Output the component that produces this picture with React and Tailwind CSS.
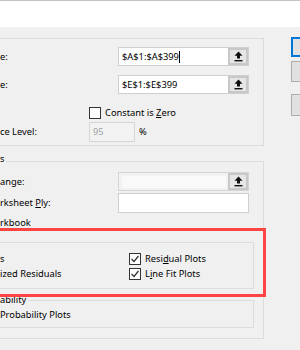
import React from "react";

function RefButton() {
  return (
    <div className="w-[20px] h-full shrink-0 flex items-center justify-center bg-[#e6e6e6] border-2 border-[#c8c8c8]">
      <svg width="9" height="11" viewBox="0 0 9 11">
        <path d="M4.5 0.5 L8.5 4.8 H6 V7.6 H3 V4.8 H0.5 Z" fill="#111" />
        <rect x="0.5" y="9" width="8" height="1.4" fill="#111" />
      </svg>
    </div>
  );
}

function RefInput({ value, caret, disabled }) {
  return (
    <div className={`flex h-[19px] w-[131px] border ${disabled ? "border-[#d4d4d4] bg-[#f2f2f2]" : "border-[#cfcfcf] bg-white"}`}>
      <div className="flex-1 flex items-center pl-[3px]">
        {disabled ? (
          <div className="w-[104px] h-[12px] bg-[#f9f9f9]" />
        ) : (
          <>
            <span>{value}</span>
            {caret && <span className="w-px h-[12px] bg-black" />}
          </>
        )}
      </div>
      <RefButton />
    </div>
  );
}

function Check({ checked }) {
  return (
    <div className="w-[12px] h-[12px] border border-[#333] bg-white flex items-center justify-center shrink-0">
      {checked && (
        <svg width="10" height="10" viewBox="0 0 10 10">
          <path d="M1.5 5 L4 7.5 L8.5 2" fill="none" stroke="#333" strokeWidth="1.2" />
        </svg>
      )}
    </div>
  );
}

function Button({ focused, className }) {
  return (
    <div
      className={`w-[40px] bg-[#e1e1e1] ${focused ? "border-2 border-[#0078d7]" : "border border-[#adadad]"} ${className}`}
    />
  );
}

export default function App() {
  return (
    <div className="w-[300px] h-[350px] overflow-hidden bg-[#f0f0f0] text-[9.3px] leading-[12px] text-black font-['Noto_Sans',sans-serif]">
      <div className="h-[27px] bg-white border-t border-[#c4c4c4]" />
      <div className="flex">
        {/* left column */}
        <div className="w-[264px] shrink-0 pt-[11px] relative">
          {/* Input */}
          <div className="h-[108px] border border-l-0 border-[#dcdcdc]">
            <div className="flex items-center mt-[8px]">
              <span className="w-[118px]">e:</span>
              <RefInput value="$A$1:$A$399" caret />
            </div>
            <div className="flex items-center mt-[9px]">
              <span className="w-[118px]">e:</span>
              <RefInput value="$E$1:$E$399" />
            </div>
            <div className="flex items-center mt-[13px] pl-[89px] gap-[4px] h-[12px]">
              <Check />
              <span>
                Constant is <span className="underline">Z</span>ero
              </span>
            </div>
            <div className="flex items-center mt-[3px] h-[20px]">
              <span className="w-[89px]">ce Level:</span>
              <div className="w-[46px] h-[20px] border border-[#d6d6d6] bg-[#f3f3f3] flex items-center pl-[3px] text-[#a0a0a0]">
                95
              </div>
              <span className="ml-[4px]">%</span>
            </div>
          </div>

          {/* Output options */}
          <div className="mt-[15px] h-[178px] border border-l-0 border-[#dcdcdc] relative">
            <span className="absolute left-0 top-[-9px] bg-[#f0f0f0] pr-[2px]">s</span>
            <div className="flex items-center mt-[10px]">
              <span className="w-[118px]">ange:</span>
              <RefInput disabled />
            </div>
            <div className="flex items-center mt-[2px]">
              <span className="w-[118px]">
                rksheet <span className="underline">P</span>ly:
              </span>
              <div className="w-[131px] h-[20px] border border-[#cfcfcf] bg-white" />
            </div>
            <div className="mt-[4px]">rkbook</div>

            {/* Residuals */}
            <div className="mt-[13px] mr-[9px] h-[47px] border border-l-0 border-[#dcdcdc] pt-[8px]">
              <div className="flex items-center h-[15px]">
                <span className="w-[129px]">s</span>
                <Check checked />
                <span className="ml-[4px]">
                  Resi<span className="underline">d</span>ual Plots
                </span>
              </div>
              <div className="flex items-center h-[15px]">
                <span className="w-[129px]">ized Residuals</span>
                <Check checked />
                <span className="ml-[4px]">
                  L<span className="underline">i</span>ne Fit Plots
                </span>
              </div>
            </div>

            {/* Normal Probability */}
            <div className="mt-[11px] mr-[9px] h-[28px] border border-l-0 border-[#dcdcdc] relative">
              <span className="absolute left-0 top-[-7px] bg-[#f0f0f0] pr-[2px]">ability</span>
              <div className="mt-[8px]">Probability Plots</div>
            </div>
          </div>

          {/* red annotation */}
          <div className="absolute left-[-5px] top-[201px] w-[271px] h-[69px] border-[3px] border-[#ff4444] pointer-events-none" />
        </div>

        {/* right column: buttons */}
        <div className="flex-1 pl-[27px]">
          <Button focused className="mt-[10px] h-[20px]" />
          <Button className="mt-[4px] h-[21px]" />
          <Button className="mt-[12px] h-[22px]" />
        </div>
      </div>
    </div>
  );
}
